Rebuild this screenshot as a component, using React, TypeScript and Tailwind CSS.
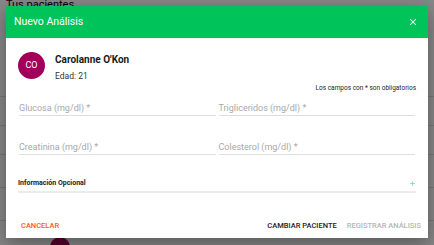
import { X, Plus } from "lucide-react";

function Field({ label }: { label: string }) {
  return (
    <div className="flex flex-col">
      <span className="text-[9px] text-[#a8a8a8] leading-none pb-[2px]">{label}</span>
      <div className="h-px bg-[#dedede]" />
    </div>
  );
}

export default function App() {
  return (
    <div className="relative w-[434px] h-[245px] overflow-hidden bg-white font-['Roboto',sans-serif]">
      {/* page behind the dialog */}
      <div className="flex flex-col">
        <div className="px-[6px] -mt-[2px] text-[11px] text-black leading-[14px]">Tus pacientes</div>
        <div className="mt-[28px] flex flex-col">
          <div className="h-[57px] border-b border-[#e0e0e0]" />
          <div className="h-[29px] border-b border-[#e0e0e0]" />
          <div className="h-[29px] border-b border-[#e0e0e0]" />
          <div className="h-[33px] border-b border-[#e0e0e0]" />
          <div className="h-[33px] border-b border-[#e0e0e0]" />
          <div className="pl-[50px] pt-[16px]">
            <div className="w-[20px] h-[20px] rounded-full bg-[#a0005a]" />
          </div>
        </div>
      </div>

      {/* backdrop */}
      <div className="absolute inset-0 bg-black/[0.47]" />

      {/* dialog */}
      <div className="absolute left-[6px] top-[6px] w-[422px] h-[232px] bg-white shadow-[0_6px_18px_rgba(0,0,0,0.35)] flex flex-col">
        <div className="h-[32px] bg-[#00c35a] flex items-center justify-between pl-[8px] pr-[10px]">
          <span className="text-white text-[10.5px]">Nuevo Análisis</span>
          <X className="w-[10px] h-[10px] text-white" strokeWidth={2.5} />
        </div>

        <div className="flex flex-col px-[12px]">
          <div className="flex items-center gap-[10px] pt-[12px]">
            <div className="w-[27px] h-[27px] rounded-full bg-[#a0005a] flex items-center justify-center text-white text-[9px]">
              CO
            </div>
            <div className="flex flex-col gap-[7px] pt-[5px]">
              <span className="text-[10px] font-bold text-[#1a1a1a] leading-none">Carolanne O'Kon</span>
              <span className="text-[8.5px] text-[#333] leading-none">Edad: 21</span>
            </div>
          </div>

          <div className="text-right text-[6.5px] text-[#222] mt-[3px]">
            Los campos con * son obligatorios
          </div>

          <div className="grid grid-cols-2 gap-x-[3px] gap-y-[27px] px-[1px] mt-[11px]">
            <Field label="Glucosa (mg/dl) *" />
            <Field label="Trigliceridos (mg/dl) *" />
            <Field label="Creatinina (mg/dl) *" />
            <Field label="Colesterol (mg/dl) *" />
          </div>

          <div className="mt-[23px] flex items-center justify-between pb-[2px] border-b-2 border-[#ebebeb]">
            <span className="text-[7px] font-bold text-[#222]">Información Opcional</span>
            <Plus className="w-[7px] h-[7px] text-[#4cd68b]" strokeWidth={2} />
          </div>
        </div>

        <div className="mt-auto flex items-center justify-between pl-[15px] pr-[7px] pb-[7px]">
          <span className="text-[7.5px] font-medium text-[#ff5722]">CANCELAR</span>
          <div className="flex items-center gap-[10px]">
            <span className="text-[7.5px] font-medium text-[#222]">CAMBIAR PACIENTE</span>
            <span className="text-[7.5px] font-medium text-[#b5b5b5]">REGISTRAR ANÁLISIS</span>
          </div>
        </div>
      </div>
    </div>
  );
}
